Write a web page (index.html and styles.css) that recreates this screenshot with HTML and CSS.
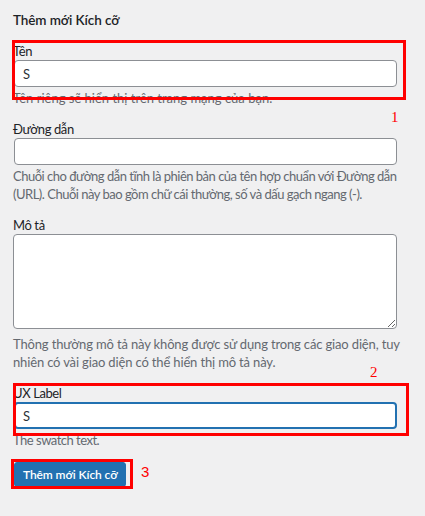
FILE: index.html
```html
<!DOCTYPE html>
<html lang="vi">
<head>
<meta charset="utf-8">
<title>Thêm mới Kích cỡ</title>
<link rel="stylesheet" href="styles.css">
</head>
<body>
<div class="page">
  <h2 class="title">Thêm mới Kích cỡ</h2>
  <form class="form">
    <div class="field field-name">
      <label class="label">Tên</label>
      <input class="input" type="text" value="S">
      <p class="help">Tên riêng sẽ hiển thị trên trang mạng của bạn.</p>
    </div>
    <div class="field">
      <label class="label">Đường dẫn</label>
      <input class="input" type="text" value="">
      <p class="help help-slug">Chuỗi cho đường dẫn tĩnh là phiên bản của tên hợp chuẩn với Đường dẫn<br>(URL). Chuỗi này bao gồm chữ cái thường, số và dấu gạch ngang (-).</p>
    </div>
    <div class="field">
      <label class="label">Mô tả</label>
      <textarea class="textarea"></textarea>
      <p class="help help-desc">Thông thường mô tả này không được sử dụng trong các giao diện, tuy<br>nhiên có vài giao diện có thể hiển thị mô tả này.</p>
    </div>
    <div class="field">
      <label class="label">UX Label</label>
      <input class="input input-focus" type="text" value="S">
      <p class="help help-swatch">The swatch text.</p>
    </div>
    <div class="actions">
      <button type="button" class="button">Thêm mới Kích cỡ</button>
    </div>
  </form>

  <div class="mark mark-1"></div>
  <span class="num num-1">1</span>
  <div class="mark mark-2"></div>
  <span class="num num-2">2</span>
  <div class="mark mark-3"></div>
  <span class="num num-3">3</span>
</div>
</body>
</html>
```

FILE: styles.css
```css
* { box-sizing: border-box; }
html, body {
  margin: 0;
  padding: 0;
  background: #f0f0f1;
}
body {
  font-family: "Lato", "Roboto", sans-serif;
  font-size: 13px;
  color: #1d2327;
}
.page {
  position: relative;
  width: 425px;
  height: 516px;
  padding: 11px 0 0 13px;
  overflow: hidden;
}
.title {
  margin: 0;
  font-size: 13.5px;
  line-height: 18px;
  font-weight: 600;
  letter-spacing: -0.1px;
  color: #1d2327;
}
.form {
  display: flex;
  flex-direction: column;
  width: 384px;
  margin-top: 13px;
}
.field {
  display: flex;
  flex-direction: column;
  margin-bottom: 13px;
}
.label {
  display: block;
  line-height: 18px;
  letter-spacing: -0.4px;
}
.input {
  display: block;
  height: 27px;
  margin: 0 0 0 1px;
  width: 383px;
  padding: 0 8px;
  font-family: inherit;
  font-size: 13px;
  color: #2c3338;
  background: #fff;
  border: 1px solid #8c8f94;
  border-radius: 4px;
  outline: none;
}
.input-focus {
  border: 2px solid #2271b1;
  padding: 0 7px;
}
.textarea {
  display: block;
  width: 384px;
  height: 95px;
  margin: 0;
  font-family: inherit;
  background: #fff;
  border: 1px solid #8c8f94;
  border-radius: 4px;
  resize: both;
}
.help {
  margin: 2px 0 0;
  line-height: 18px;
  color: #646970;
  white-space: nowrap;
}
.help-slug { letter-spacing: -0.5px; }
.help-desc { margin-top: 6px; letter-spacing: -0.15px; }
.help-swatch { letter-spacing: -0.5px; }
.actions {
  display: flex;
  padding-left: 1px;
}
.button {
  height: 25px;
  padding: 0 8px;
  font-family: inherit;
  font-size: 12px;
  font-weight: 600;
  letter-spacing: -0.1px;
  color: #fff;
  background: #2271b1;
  border: 1px solid #2271b1;
  border-radius: 3px;
}

/* annotation overlays */
.mark {
  position: absolute;
  border: 3px solid #ff0000;
}
.mark-1 { left: 12px; top: 40px; width: 394px; height: 60px; }
.mark-2 { left: 13px; top: 383px; width: 396px; height: 53px; }
.mark-3 { left: 11px; top: 459px; width: 122px; height: 30px; }
.num {
  position: absolute;
  font-family: "Liberation Serif", serif;
  font-size: 15px;
  line-height: 16px;
  color: #ff0000;
}
.num-1 { left: 391px; top: 109px; }
.num-2 { left: 370px; top: 364px; }
.num-3 { left: 141px; top: 464px; font-family: "Liberation Sans", sans-serif; }
```
